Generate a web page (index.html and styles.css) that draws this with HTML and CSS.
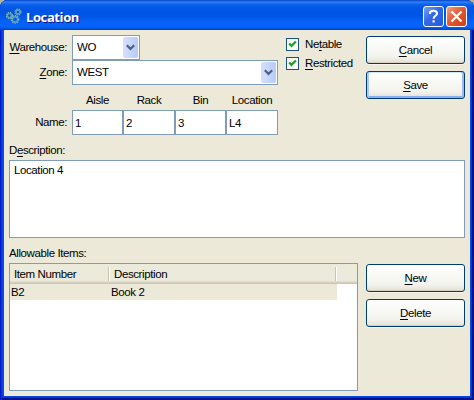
FILE: index.html
```html
<!DOCTYPE html>
<html lang="en">
<head>
<meta charset="utf-8">
<title>Location</title>
<link rel="stylesheet" href="styles.css">
</head>
<body>
<div class="window">
  <header class="titlebar">
    <svg class="app-icon" width="16" height="16" viewBox="0 0 16 16" fill="none">
      <g stroke="#8fb9b4" stroke-width="1.2" stroke-dasharray="1.4 1"><circle cx="3.4" cy="7.6" r="3"/><circle cx="12" cy="4" r="3"/><circle cx="9" cy="11.4" r="3.7"/></g>
      <g stroke="#5fa3b8" stroke-width="1.5"><circle cx="3.4" cy="7.6" r="2.1"/><circle cx="12" cy="4" r="2"/><circle cx="9" cy="11.4" r="2.7"/></g>
    </svg>
    <h1>Location</h1>
    <button class="caption help"><svg width="19" height="19" viewBox="0 0 19 19" fill="none"><path d="M6 7V5.8C6 4.4 7.5 3.8 9.5 3.8S13 4.7 13 6.4C13 8.8 9.6 8.7 9.6 11.7M9.6 13.2V15.5" stroke="#fff" stroke-width="2.1"/></svg></button>
    <button class="caption close"><svg width="19" height="19" viewBox="0 0 19 19"><path d="M4.5 4.5L14.5 14.5M14.5 4.5L4.5 14.5" stroke="#fff" stroke-width="2.3"/></svg></button>
  </header>
  <main class="client">
    <section class="top">
      <div class="fields">
        <label class="lab"><span><u>W</u>arehouse:</span></label>
        <div class="combo short"><span>WO</span><i class="drop"><svg width="9" height="7" viewBox="0 0 9 7"><path d="M.8 1.2L4.5 4.9L8.2 1.2" fill="none" stroke="#4d6185" stroke-width="2.2"/></svg></i></div>
        <label class="lab"><span><u>Z</u>one:</span></label>
        <div class="combo"><span>WEST</span><i class="drop"><svg width="9" height="7" viewBox="0 0 9 7"><path d="M.8 1.2L4.5 4.9L8.2 1.2" fill="none" stroke="#4d6185" stroke-width="2.2"/></svg></i></div>
        <span></span>
        <div class="heads"><span>Aisle</span><span>Rack</span><span>Bin</span><span>Location</span></div>
        <label class="lab name">Name:</label>
        <div class="parts"><span>1</span><span>2</span><span>3</span><span>L4</span></div>
      </div>
      <div class="checks">
        <label class="check"><i><svg width="9" height="9" viewBox="0 0 9 9"><path d="M1.2 3.4L3.5 5.9L7.9 1.5" fill="none" stroke="#21a121" stroke-width="2.2"/></svg></i><span>Ne<u>t</u>able</span></label>
        <label class="check"><i><svg width="9" height="9" viewBox="0 0 9 9"><path d="M1.2 3.4L3.5 5.9L7.9 1.5" fill="none" stroke="#21a121" stroke-width="2.2"/></svg></i><span><u>R</u>estricted</span></label>
      </div>
      <div class="buttons">
        <button class="btn"><span><u>C</u>ancel</span></button>
        <button class="btn default"><span><u>S</u>ave</span></button>
      </div>
    </section>
    <div class="caption-text">D<u>e</u>scription:</div>
    <div class="memo">Location 4</div>
    <div class="caption-text items">Allowable Items:</div>
    <section class="bottom">
      <div class="list">
        <div class="list-head"><span class="c1">Item Number</span><span class="c2">Description</span></div>
        <div class="list-row"><span class="r1">B2</span><span>Book 2</span></div>
      </div>
      <div class="buttons">
        <button class="btn"><span><u>N</u>ew</span></button>
        <button class="btn"><span><u>D</u>elete</span></button>
      </div>
    </section>
  </main>
</div>
</body>
</html>
```
FILE: styles.css
```css
* { box-sizing: border-box; }
body { margin: 0; background: #b5b29f; }
body, button { font: 11.5px/14px "Liberation Sans", Arial, sans-serif; letter-spacing: -.4px; color: #000; }
button { padding: 0; }
u { text-underline-offset: 2px; text-decoration-thickness: 1px; text-decoration-skip-ink: none; }
i { display: flex; align-items: center; justify-content: center; }

.window {
  width: 474px; height: 400px; padding: 0 4px 4px;
  border-radius: 8px 8px 0 0; overflow: hidden;
  background: #0a48e2;
  box-shadow: inset 1px 0 #0019cf, inset 2px 0 #0831d9, inset -2px 0 #00138c, inset 0 -2px #00138c, inset -3px -3px #0831d9;
}
.titlebar {
  height: 30px; margin: 0 -4px; padding: 3px 7px 0 6px;
  display: flex; align-items: center;
  background: linear-gradient(#0842c8 0, #2b82f5 2px, #0f66ef 4px, #0257e6 7px, #0054e3 15px, #0560f5 21px, #0665ff 26px, #0458e6 28px, #0240c0 30px);
}
.app-icon { flex: none; margin-top: -2px; }
h1 { flex: 1; margin: 0 0 0 4px; font: bold 13px/18px "Open Sans", sans-serif; letter-spacing: -.4px; color: #fff; text-shadow: 1px 1px #0a1883; }
.caption { width: 21px; height: 21px; border: 1px solid #fff; border-radius: 3px; overflow: hidden; }
.caption svg { display: block; }
.help { margin-right: 2px; background: linear-gradient(135deg, #7ba2f6, #3367e5 45%, #235be5); }
.close { background: linear-gradient(135deg, #f0a087, #e25a34 45%, #cf3c12); }

.client { height: 366px; padding: 5px 5px 0; background: #ece9d8; }
.top { display: flex; height: 107px; }
.fields { width: 269px; display: grid; grid-template-columns: 63px 206px; grid-template-rows: 25px 25px 25px 25px; }
.lab { padding: 5px 5px 0 0; text-align: right; white-space: nowrap; }
.combo { position: relative; height: 25px; border: 1px solid #7f9db9; background: #fff; padding: 4px 4px; }
.short { width: 68px; }
.drop { position: absolute; right: 1px; top: 1px; width: 15px; height: 21px; border-radius: 2px; background: linear-gradient(90deg, #d5e1fc, #b7cbf8); }
.heads, .parts { display: grid; grid-template-columns: 51px 52px 51px 52px; }
.heads { padding: 8px 0 0; text-align: center; }
.parts span { height: 25px; border: 1px solid #7f9db9; background: #fff; padding: 5px 1px 0 2px; }
.name { padding-top: 5px; }

.checks { margin-left: 8px; padding-top: 3px; width: 80px; display: flex; flex-direction: column; gap: 6px; }
.check { height: 13px; display: flex; align-items: center; gap: 6px; white-space: nowrap; }
.check span { margin-top: -1px; }
.check i { width: 13px; height: 13px; border: 1px solid #1c5180; background: linear-gradient(135deg, #f0f0ed, #fff); }

.buttons { width: 99px; display: flex; flex-direction: column; gap: 7px; }
.top .buttons { padding-top: 1px; }
.btn { height: 28px; border: 1px solid #003c74; border-radius: 3px; background: linear-gradient(#fff, #f3f3ee 75%, #e3dfd2); box-shadow: inset 0 -1px #d6d0c5, 0 1px #f7f5ed; }
.default { box-shadow: inset 2px 0 #b0c8f4, inset -2px 0 #a0bbef, inset 0 1px #cee7ff, inset 0 -2px #89adee; }

.caption-text { height: 18px; padding-top: 1px; }
.memo { height: 78px; width: 456px; border: 1px solid #7f9db9; background: #fff; padding: 2px 4px; }
.items { height: 25px; padding-top: 8px; }
.bottom { display: flex; justify-content: space-between; }
.bottom .buttons { padding-top: 1px; }
.list { width: 349px; height: 128px; border: 1px solid #7f9db9; background: #fff; }
.list-head { height: 20px; display: flex; padding: 3px 0 0 4px; background: #ebeadb; box-shadow: inset 0 -1px #cbc7b8, inset 0 -2px #d6d2c2, inset 0 -3px #e2decd; }
.c1, .c2 { height: 14px; border-right: 1px solid #c7c5b2; box-shadow: 1px 0 #fff; }
.c1 { width: 95px; }
.c2 { width: 227px; padding-left: 5px; }
.list-row { width: 327px; height: 16px; display: flex; background: #ece9d8; padding: 1px; }
.r1 { width: 100px; }
```
